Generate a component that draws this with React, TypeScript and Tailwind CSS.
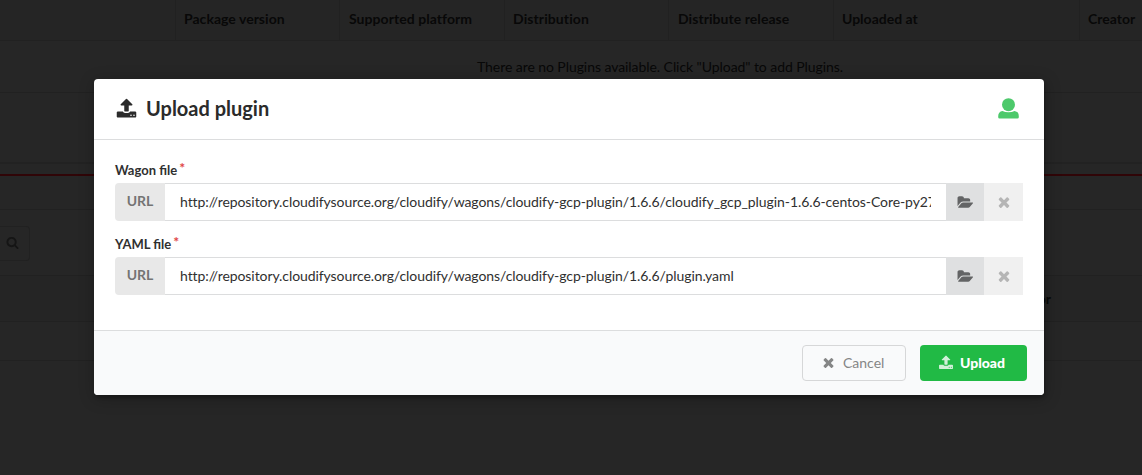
import type { ReactNode } from "react";

const UPLOAD =
  "M1344 1472q0-26-19-45t-45-19-45 19-19 45 19 45 45 19 45-19 19-45zm256 0q0-26-19-45t-45-19-45 19-19 45 19 45 45 19 45-19 19-45zm128-224v320q0 40-28 68t-68 28h-1472q-40 0-68-28t-28-68v-320q0-40 28-68t68-28h427q21 56 70.5 92t110.5 36h256q61 0 110.5-36t70.5-92h427q40 0 68 28t28 68zm-325-648q-17 40-59 40h-256v448q0 26-19 45t-45 19h-256q-26 0-45-19t-19-45v-448h-256q-42 0-59-40-17-39 14-69l448-448q18-19 45-19t45 19l448 448q31 30 14 69z";
const TIMES =
  "M1490 1322q0 40-28 68l-136 136q-28 28-68 28t-68-28l-294-294-294 294q-28 28-68 28t-68-28l-136-136q-28-28-28-68t28-68l294-294-294-294q-28-28-28-68t28-68l136-136q28-28 68-28t68 28l294 294 294-294q28-28 68-28t68 28l136 136q28 28 28 68t-28 68l-294 294 294 294q28 28 28 68z";
const FOLDER =
  "M1943 952q0 31-31 66l-336 396q-43 51-120.5 86.5t-143.5 35.5h-1088q-34 0-60.5-13t-26.5-43q0-31 31-66l336-396q43-51 120.5-86.5t143.5-35.5h1088q34 0 60.5 13t26.5 43zm-343-344v160h-832q-94 0-197 47.5t-164 119.5l-337 396-5 6q0-4-.5-12.5t-.5-12.5v-960q0-92 66-158t158-66h320q92 0 158 66t66 158v32h544q92 0 158 66t66 158z";
const SEARCH =
  "M1216 832q0-185-131.5-316.5t-316.5-131.5-316.5 131.5-131.5 316.5 131.5 316.5 316.5 131.5 316.5-131.5 131.5-316.5zm512 832q0 52-38 90t-90 38q-54 0-90-38l-343-342q-179 124-399 124-143 0-273.500-55.500t-225-150-150-225-55.500-273.500 55.500-273.500 150-225 225-150 273.500-55.500 273.500 55.500 225 150 150 225 55.500 273.500q0 220-124 399l343 343q37 37 37 90z";

function Icon({ d, box = "0 0 1792 1792", className }: { d: string; box?: string; className: string }) {
  return (
    <svg viewBox={box} className={className} fill="currentColor" aria-hidden="true">
      <path d={d} />
    </svg>
  );
}

function Th({ className, children }: { className: string; children?: ReactNode }) {
  return (
    <div className={`h-full shrink-0 border-l border-[#212121] pt-[9px] leading-5 ${className}`}>{children}</div>
  );
}

function Page() {
  return (
    <div className="flex h-full flex-col bg-[#262626] text-[14px] text-[#080808]">
      <div className="flex h-[41px] shrink-0 overflow-hidden border-b border-[#212121] bg-[#252525] font-bold">
        <div className="w-[175px] shrink-0" />
        <Th className="w-[164px] pl-[8px] tracking-[0.03px]">Package version</Th>
        <Th className="w-[165px] pl-[9px] tracking-[0.06px]">Supported platform</Th>
        <Th className="w-[164px] pl-[8px] tracking-[0.1px]">Distribution</Th>
        <Th className="w-[165px] pl-[9px] tracking-[0.06px]">Distribute release</Th>
        <Th className="w-[246px] pl-[8px]">Uploaded at</Th>
        <Th className="w-[63px] pl-[8px]">Creator</Th>
      </div>
      <div className="flex h-[52px] shrink-0 justify-center border-b border-[#212121] pt-[16px] pl-[178px] leading-5 tracking-[-0.065px]">
        There are no Plugins available. Click "Upload" to add Plugins.
      </div>
      <div className="h-[71px] shrink-0 border-b-2 border-[#222222]" />
      <div className="h-[10px] shrink-0" />
      <div className="h-[2px] shrink-0 bg-[#300507]" />
      <div className="h-[34px] shrink-0 border-b border-[#212121]" />
      <div className="h-[66px] shrink-0 border-b border-[#212121] pt-[16px]">
        <div className="flex h-[35px] w-[30px] items-center rounded-r border border-l-0 border-[#212121] pl-[6px] text-[#151515]">
          <Icon d={SEARCH} className="-mt-[2px] h-[13px] w-[13px]" />
        </div>
      </div>
      <div className="flex h-[46px] shrink-0 items-center justify-end border-b border-[#212121] bg-[#252525] pr-[91px] font-bold">
        Creator
      </div>
      <div className="h-[39px] shrink-0 border-b border-[#212121]" />
    </div>
  );
}

function FileField({ label, url, className }: { label: string; url: string; className: string }) {
  return (
    <div className={className}>
      <div className="flex h-[18px] text-[13px] leading-[18px] font-bold text-[#303030]">
        <span>{label}</span>
        <span className="-mt-[2px] ml-[2px] text-[14px] font-bold text-[#e04545]">*</span>
      </div>
      <div className="mt-1 flex h-[38px]">
        <div className="flex w-[50px] shrink-0 items-center justify-center rounded-l bg-[#e8e8e8] pb-[3px] text-[14px] font-bold text-[#747474]">
          URL
        </div>
        <div className="flex min-w-0 flex-1 items-center border-y border-[#dcddde] px-[15px] pb-[2px] text-[14px] tracking-[-0.077px] text-[#303030]">
          <span className="w-full overflow-hidden whitespace-nowrap">{url}</span>
        </div>
        <div className="flex w-[38px] items-center justify-center bg-[#dfe0e1] pt-px text-[#636465]">
          <Icon d={FOLDER} box="0 0 1943 1792" className="h-[15px] w-[16px]" />
        </div>
        <div className="flex w-[39px] items-center justify-center bg-[#f0f0f0] text-[#b5b5b5]">
          <Icon d={TIMES} className="h-[16px] w-[16px]" />
        </div>
      </div>
    </div>
  );
}

export default function App() {
  return (
    <div className="relative h-[475px] w-[1142px] overflow-hidden font-['Lato',sans-serif]">
      <Page />
      <div className="absolute top-[79px] left-[94px] flex h-[316px] w-[950px] flex-col overflow-hidden rounded bg-white shadow-[1px_3px_3px_0_rgba(0,0,0,0.2),1px_3px_15px_2px_rgba(0,0,0,0.2)]">
        <div className="flex h-[61px] shrink-0 items-center border-b border-[#dcddde] pr-[25px] pb-[2px] pl-[22px] text-[#2b2b2b]">
          <Icon d={UPLOAD} className="h-[21px] w-[21px]" />
          <h1 className="ml-[9px] flex-1 text-[20px] leading-6 font-bold">Upload plugin</h1>
          <svg viewBox="0 0 21 21" className="h-[21px] w-[21px] text-[#4dc96b]" fill="currentColor" aria-hidden="true">
            <circle cx="10.500" cy="6.700" r="6.500" />
            <path d="M4.500 12.900q2.500 1.400 6 1.400t6-1.400q4.300.6 4.300 5.300v1q0 1.400-1.400 1.400H1.600q-1.400 0-1.400-1.400v-1q0-4.700 4.300-5.300z" />
          </svg>
        </div>
        <div className="h-[190px] shrink-0 px-[21px] pt-[21px]">
          <FileField
            className="h-[74px]"
            label="Wagon file"
            url="http://repository.cloudifysource.org/cloudify/wagons/cloudify-gcp-plugin/1.6.6/cloudify_gcp_plugin-1.6.6-centos-Core-py27-none-linux_x86_64.wgn"
          />
          <FileField
            className=""
            label="YAML file"
            url="http://repository.cloudifysource.org/cloudify/wagons/cloudify-gcp-plugin/1.6.6/plugin.yaml"
          />
        </div>
        <div className="flex flex-1 justify-end gap-[14px] border-t border-[#dcddde] bg-[#f9fafb] pt-[14px] pr-[17px]">
          <button className="flex h-[36px] w-[104px] items-center rounded border border-[#d6d7d8] pb-px pl-[18px] text-[14px] text-[#858686]">
            <Icon d={TIMES} className="h-[15px] w-[15px]" />
            <span className="ml-[7px]">Cancel</span>
          </button>
          <button className="flex h-[36px] w-[107px] items-center rounded bg-[#21ba45] pb-px pl-[18px] text-[14px] font-black text-white">
            <Icon d={UPLOAD} className="h-[15px] w-[16px] opacity-80" />
            <span className="ml-[6px]">Upload</span>
          </button>
        </div>
      </div>
    </div>
  );
}
